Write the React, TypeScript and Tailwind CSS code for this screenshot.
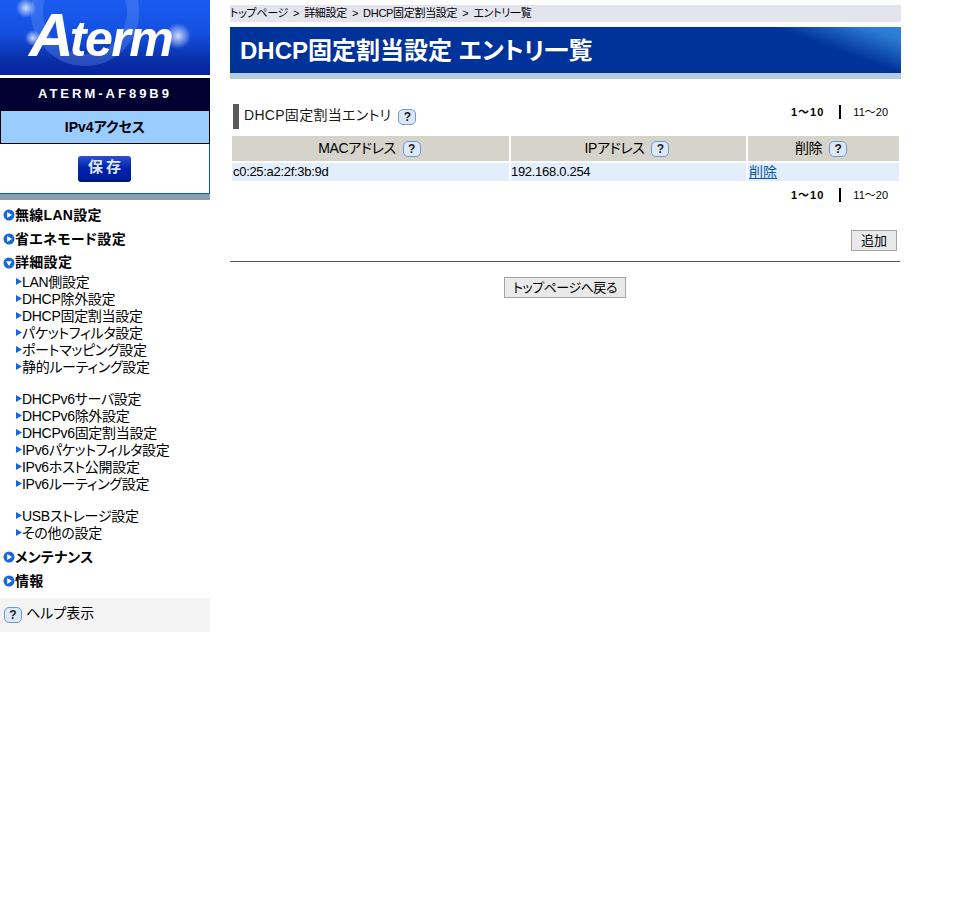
const font = 'font-["Liberation_Sans","Noto_Sans_CJK_JP",sans-serif] [font-feature-settings:"palt"]'

function HelpIcon({ className = '' }: { className?: string }) {
  return (
    <span
      className={`inline-flex h-[16px] w-[18px] shrink-0 items-center justify-center rounded-[5px] border border-[#6f9bcc] bg-[#dae8f8] text-[12px] leading-none font-bold tracking-normal text-[#1a1a1a] ${className}`}
    >
      ?
    </span>
  )
}

function CircleArrow({ down = false }: { down?: boolean }) {
  return (
    <svg width="12" height="12" viewBox="0 0 12 12" className="shrink-0">
      <circle cx="6" cy="6" r="5.5" fill="#1668d8" />
      {down ? (
        <path d="M3 4.2h6L6 9z" fill="#fff" />
      ) : (
        <path d="M4.2 3v6L9 6z" fill="#fff" />
      )}
    </svg>
  )
}

function SubArrow() {
  return (
    <svg width="6" height="7" viewBox="0 0 6 7" className="mb-[3px] shrink-0">
      <path d="M0 0l6 3.5L0 7z" fill="#1668d8" />
    </svg>
  )
}

function TopItem({ label, down }: { label: string; down?: boolean }) {
  return (
    <div className="flex h-[24px] items-center pl-[3px] text-[14px] font-bold tracking-[0.3px] text-black">
      <CircleArrow down={down} />
      <span>{label}</span>
    </div>
  )
}

function SubItem({ label }: { label: string }) {
  return (
    <div className="flex h-[17px] items-center pl-[16px] text-[14px] leading-[17px] tracking-[-0.3px] text-black">
      <SubArrow />
      <span>{label}</span>
    </div>
  )
}

function Pager({ className = '' }: { className?: string }) {
  return (
    <div className={`flex items-center justify-end pr-[13px] text-[11px] leading-none text-black ${className}`}>
      <span className="font-bold tracking-[1px]">1〜10</span>
      <span className="mr-[12px] ml-[15px] h-[14px] w-[2px] bg-black" />
      <span>11〜20</span>
    </div>
  )
}

function Logo() {
  return (
    <div className="relative h-[75px] overflow-hidden bg-[linear-gradient(180deg,#1a5cf0_0%,#1450e0_45%,#0a2fa8_80%,#06249a_100%)]">
      <svg width="210" height="75" viewBox="0 0 210 75" className="absolute inset-0">
        <defs>
          <radialGradient id="glow">
            <stop offset="0%" stopColor="#fff" stopOpacity="0.8" />
            <stop offset="100%" stopColor="#fff" stopOpacity="0" />
          </radialGradient>
        </defs>
        <circle cx="85" cy="12" r="48" fill="none" stroke="#7fa6f5" strokeOpacity="0.28" strokeWidth="12" />
        <circle cx="26" cy="8" r="10" fill="url(#glow)" />
        <circle cx="33" cy="38" r="8" fill="url(#glow)" />
        <circle cx="178" cy="36" r="13" fill="url(#glow)" />
      </svg>
      <div className="absolute top-0 left-[29px] flex items-baseline font-['Liberation_Sans',sans-serif] leading-[70px] font-bold text-white italic">
        <span className="text-[62px] tracking-[-4px]">A</span>
        <span className="text-[50px] tracking-[-1.5px]">term</span>
      </div>
    </div>
  )
}

function Sidebar() {
  return (
    <aside className="w-[210px] shrink-0">
      <Logo />
      <div className="mt-[3px] flex h-[32px] items-center justify-center bg-[#000033] text-[13px] font-bold tracking-[3px] text-white">
        ATERM-AF89B9
      </div>
      <div className="flex h-[34px] items-center justify-center border border-black bg-[#99ccff] text-[14px] font-bold text-black">
        IPv4アクセス
      </div>
      <div className="flex h-[50px] items-center justify-center border-r border-b border-[#006a94] bg-white">
        <button className="flex h-[26px] w-[53px] items-center justify-center gap-[3px] rounded-[3px] border-b-2 border-b-[#001a66] bg-[linear-gradient(180deg,#2c52d0_0%,#0022aa_50%,#001c9c_100%)] text-[15px] font-bold text-[#dfe8ff]">
          <span>保</span>
          <span>存</span>
        </button>
      </div>
      <div className="h-[6px] bg-[#8e9cb4]" />
      <nav className="pt-[3px]">
        <TopItem label="無線LAN設定" />
        <TopItem label="省エネモード設定" />
        <div className="flex h-[23px] items-center pl-[3px] text-[14px] font-bold tracking-[0.3px] text-black">
          <CircleArrow down />
          <span>詳細設定</span>
        </div>
        <div className="flex flex-col">
          <SubItem label="LAN側設定" />
          <SubItem label="DHCP除外設定" />
          <SubItem label="DHCP固定割当設定" />
          <SubItem label="パケットフィルタ設定" />
          <SubItem label="ポートマッピング設定" />
          <SubItem label="静的ルーティング設定" />
          <div className="h-[15px]" />
          <SubItem label="DHCPv6サーバ設定" />
          <SubItem label="DHCPv6除外設定" />
          <SubItem label="DHCPv6固定割当設定" />
          <SubItem label="IPv6パケットフィルタ設定" />
          <SubItem label="IPv6ホスト公開設定" />
          <SubItem label="IPv6ルーティング設定" />
          <div className="h-[15px]" />
          <SubItem label="USBストレージ設定" />
          <SubItem label="その他の設定" />
        </div>
        <div className="pt-[3px]">
          <TopItem label="メンテナンス" />
          <TopItem label="情報" />
        </div>
      </nav>
      <div className="mt-[5px] flex h-[34px] items-center gap-[4px] bg-[#f3f3f3] pl-[4px] text-[14px] text-black">
        <HelpIcon />
        <span className="pb-[3px]">ヘルプ表示</span>
      </div>
    </aside>
  )
}

function HeaderCell({ label, className }: { label: string; className: string }) {
  return (
    <div className={`flex h-[25px] items-center justify-center gap-[7px] bg-[#d6d3cb] text-[14px] tracking-[-0.4px] text-black ${className}`}>
      <span>{label}</span>
      <HelpIcon />
    </div>
  )
}

function Main() {
  return (
    <main className="ml-[20px] w-[671px] pt-[5px]">
      <div className="flex h-[17px] items-center gap-[5px] bg-[#e4e4ef] text-[11px] tracking-[-0.3px] whitespace-nowrap text-black">
        <span>トップページ</span>
        <span>&gt;</span>
        <span>詳細設定</span>
        <span>&gt;</span>
        <span>DHCP固定割当設定</span>
        <span>&gt;</span>
        <span>エントリ一覧</span>
      </div>
      <div className="mt-[5px] flex h-[46px] items-center bg-[linear-gradient(200deg,#2f86de_0%,#2a78d0_5%,#003399_16%)] pt-[2px] pl-[10px] text-[24px] leading-none font-bold whitespace-pre text-white">
        DHCP固定割当設定 エントリ一覧
      </div>
      <div className="h-[6px] bg-[#b5cbdf]" />

      <div className="mt-[25px] flex h-[25px] items-start justify-between">
        <div className="ml-[3px] flex h-[25px] items-center">
          <span className="h-[25px] w-[6px] bg-[#595959]" />
          <span className="ml-[5px] pb-[2px] text-[14px] tracking-[0.3px] text-[#1a1a1a]">DHCP固定割当エントリ</span>
          <HelpIcon className="ml-[7px]" />
        </div>
        <Pager className="h-[16px]" />
      </div>

      <div className="mt-[7px] ml-[2px] w-[667px]">
        <div className="flex gap-[2px]">
          <HeaderCell label="MACアドレス" className="w-[277px] pr-[2px]" />
          <HeaderCell label="IPアドレス" className="w-[235px] pr-[3px]" />
          <HeaderCell label="削除" className="w-[151px] pr-[5px]" />
        </div>
        <div className="mt-[2px] flex h-[18px] gap-[2px] text-[13px] leading-[18px] tracking-[-0.3px] text-black">
          <div className="w-[277px] bg-[#e3eefc] pl-[1px]">c0:25:a2:2f:3b:9d</div>
          <div className="w-[235px] bg-[#e3eefc]">192.168.0.254</div>
          <div className="w-[151px] bg-[#e3eefc] pl-[1px] text-[14px] tracking-normal">
            <a href="#" className="text-[#0b54a8] underline">削除</a>
          </div>
        </div>
      </div>

      <Pager className="mt-[6px] h-[16px]" />

      <div className="mt-[27px] flex justify-end pr-[4px]">
        <button className="flex h-[21px] w-[46px] items-center justify-center border border-[#a5a5a5] bg-[#e9e9e9] text-[13px] whitespace-nowrap text-black">
          追加
        </button>
      </div>

      <div className="mt-[10px] h-[1px] w-[670px] bg-[#555555]" />

      <div className="mt-[15px] flex justify-center pr-[1px]">
        <button className="flex h-[21px] w-[122px] items-center justify-center border border-[#a5a5a5] bg-[#e9e9e9] text-[13px] tracking-[-0.5px] whitespace-nowrap text-black">
          トップページへ戻る
        </button>
      </div>
    </main>
  )
}

export default function App() {
  return (
    <div className={`flex min-h-[907px] w-[958px] items-start bg-white ${font}`}>
      <Sidebar />
      <Main />
    </div>
  )
}
